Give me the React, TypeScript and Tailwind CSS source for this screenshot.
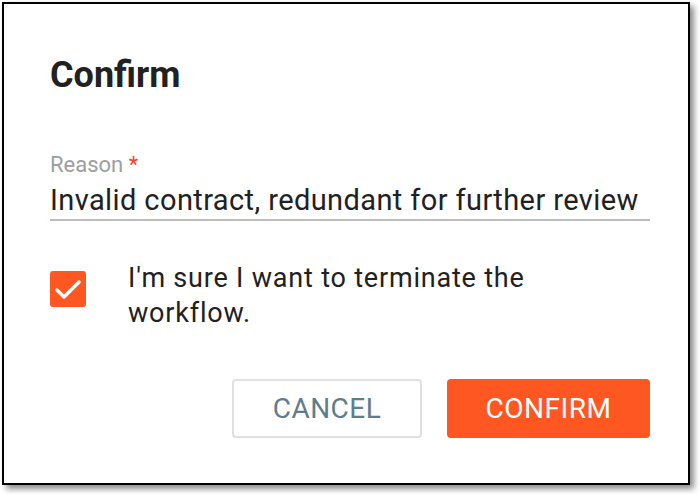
export default function App() {
  return (
    <div className="h-[494px] w-[700px] bg-white pl-[2px] pt-[2px] [font-family:Roboto,'Liberation_Sans',sans-serif]">
      <div className="box-border h-[483px] w-[688px] border-2 border-black bg-white pl-[46px] pr-[38px] pt-[50px] shadow-[4px_4px_6px_rgba(0,0,0,0.45)]">
        <h2 className="text-[36px] font-bold leading-[42px] text-[#212121]">Confirm</h2>

        <div className="mt-[56px] text-[22px] leading-[26px] text-[#9e9e9e]">
          Reason <span className="text-[#f44336]">*</span>
        </div>
        <div className="mt-[5px] border-b-2 border-[#bdbdbd] pb-[2px]">
          <div className="text-[29px] leading-[34px] tracking-[0.4px] text-[#212121]">
            Invalid contract, redundant for further review
          </div>
        </div>

        <div className="mt-[39px] flex items-start">
          <div className="mt-[11px] flex h-9 w-9 shrink-0 items-center justify-center rounded-[3px] bg-[#ff5722]">
            <svg viewBox="0 0 36 36" className="h-9 w-9">
              <polyline
                points="7,19 14,26 29,11"
                fill="none"
                stroke="white"
                strokeWidth="3.5"
                strokeLinecap="round"
                strokeLinejoin="round"
              />
            </svg>
          </div>
          <p className="ml-[42px] mt-[1px] pr-[20px] text-[27px] leading-[35px] tracking-[0.8px] text-[#212121]">
            I'm sure I want to terminate the workflow.
          </p>
        </div>

        <div className="mt-[48px] flex justify-end gap-[25px]">
          <button className="h-[59px] w-[190px] rounded-[4px] border-2 border-[#e0e0e0] bg-white text-[28px] tracking-[0.5px] text-[#607d8b]">
            CANCEL
          </button>
          <button className="h-[59px] w-[203px] rounded-[4px] bg-[#ff5722] text-[28px] tracking-[0.5px] text-white">
            CONFIRM
          </button>
        </div>
      </div>
    </div>
  );
}
